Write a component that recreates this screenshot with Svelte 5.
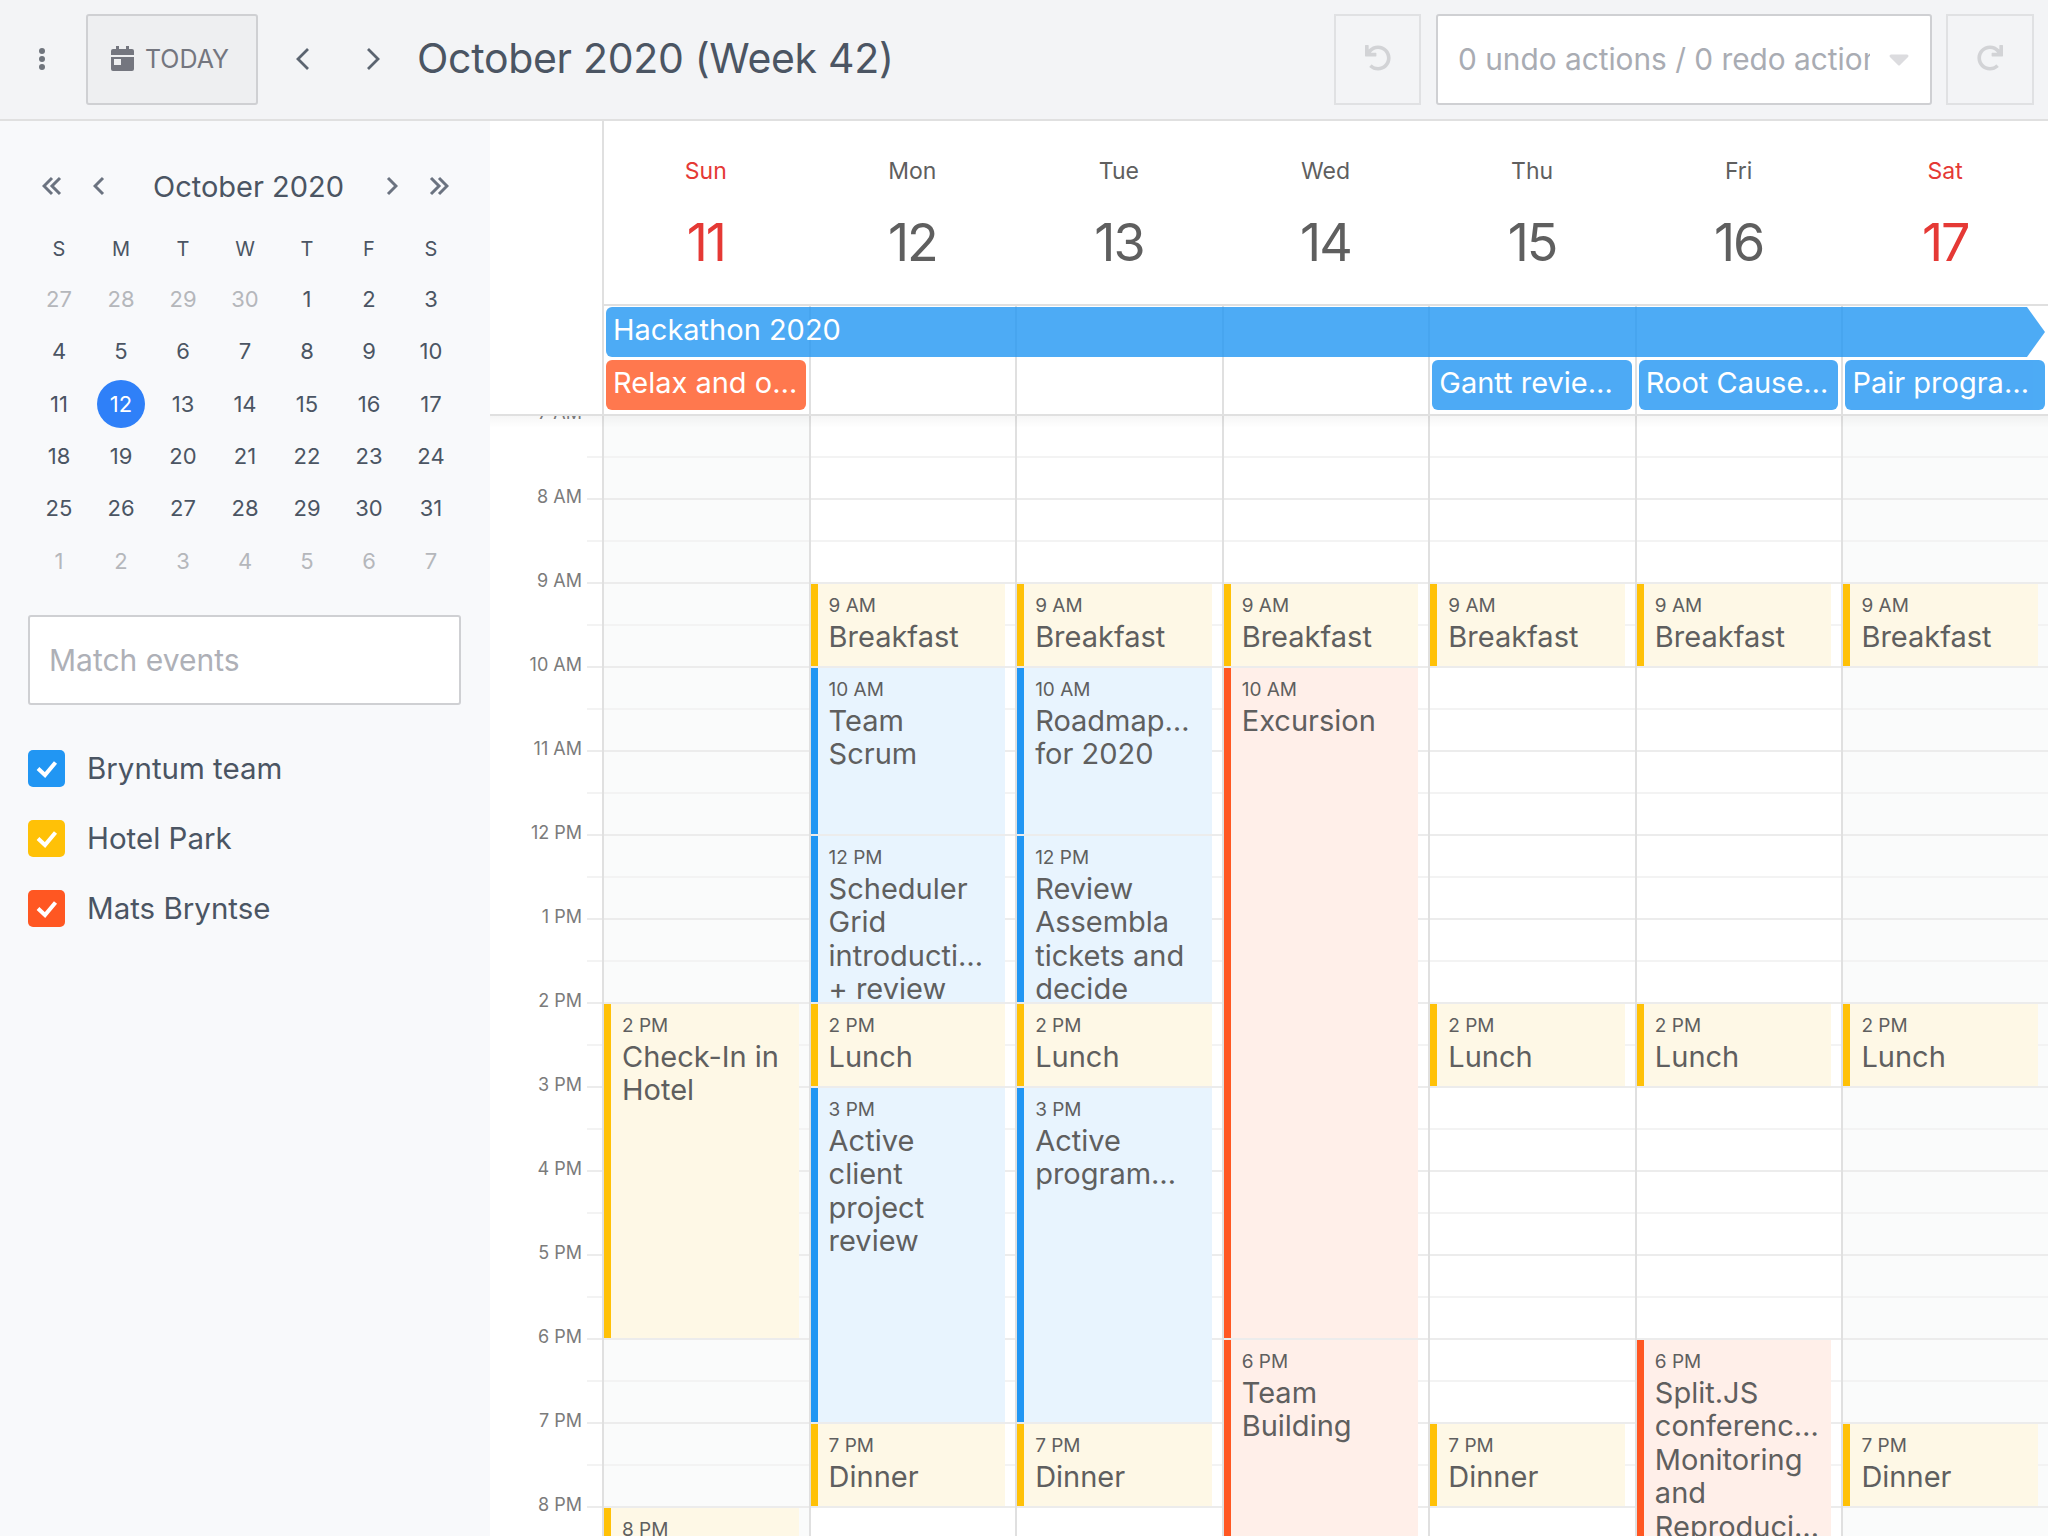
<script>
  const hours = ['6 AM','7 AM','8 AM','9 AM','10 AM','11 AM','12 PM','1 PM','2 PM','3 PM','4 PM','5 PM','6 PM','7 PM','8 PM','9 PM'];
  const days = [
    { n: 'Sun', d: 11, we: true }, { n: 'Mon', d: 12 }, { n: 'Tue', d: 13 }, { n: 'Wed', d: 14 },
    { n: 'Thu', d: 15 }, { n: 'Fri', d: 16 }, { n: 'Sat', d: 17, we: true }
  ];
  const ev = (s, e, time, c, lines) => ({ s, e, time, c, lines });
  const bf = ev(9, 10, '9 AM', 'y', ['Breakfast']);
  const lu = ev(14, 15, '2 PM', 'y', ['Lunch']);
  const di = ev(19, 20, '7 PM', 'y', ['Dinner']);
  const events = [
    [ev(14, 18, '2 PM', 'y', ['Check-In in', 'Hotel']), ev(20, 22, '8 PM', 'y', [])],
    [bf, ev(10, 12, '10 AM', 'b', ['Team', 'Scrum']), ev(12, 14, '12 PM', 'b', ['Scheduler', 'Grid', 'introducti…', '+ review']), lu, ev(15, 19, '3 PM', 'b', ['Active', 'client', 'project', 'review']), di],
    [bf, ev(10, 12, '10 AM', 'b', ['Roadmap…', 'for 2020']), ev(12, 14, '12 PM', 'b', ['Review', 'Assembla', 'tickets and', 'decide']), lu, ev(15, 19, '3 PM', 'b', ['Active', 'program…']), di],
    [bf, ev(10, 18, '10 AM', 'o', ['Excursion']), ev(18, 22, '6 PM', 'o', ['Team', 'Building'])],
    [bf, lu, di],
    [bf, lu, ev(18, 22, '6 PM', 'o', ['Split.JS', 'conferenc…', 'Monitoring', 'and', 'Reproduci…'])],
    [bf, lu, di]
  ];
  const rowOf = (h) => (h - 6) * 2 + 1;

  const weekdays = ['S', 'M', 'T', 'W', 'T', 'F', 'S'];
  const cells = [];
  for (const d of [27, 28, 29, 30]) cells.push({ d, out: true });
  for (let d = 1; d <= 31; d++) cells.push({ d, now: d === 12 });
  for (let d = 1; d <= 7; d++) cells.push({ d, out: true });

  const filters = [
    { label: 'Bryntum team', c: 'b' },
    { label: 'Hotel Park', c: 'y' },
    { label: 'Mats Bryntse', c: 'o' }
  ];
  const undoPath = 'M212.333 224.333H12c-6.627 0-12-5.373-12-12V12C0 5.373 5.373 0 12 0h48c6.627 0 12 5.373 12 12v78.112C117.773 39.279 184.26 7.47 258.175 8.007c136.906.994 246.448 111.623 246.157 248.532C504.041 393.258 393.12 504 256.333 504c-64.089 0-122.496-24.313-166.51-64.215-5.099-4.622-5.334-12.554-.467-17.42l33.967-33.967c4.474-4.474 11.662-4.717 16.401-.525C170.76 415.336 211.58 432 256.333 432c97.268 0 176-78.716 176-176 0-97.267-78.716-176-176-176-58.496 0-110.28 28.476-142.274 72.333h98.274c6.627 0 12 5.373 12 12v48c0 6.627-5.373 12-12 12z';
</script>

<div class="app">
  <header class="toolbar">
    <svg class="dots" width="8" height="24" viewBox="0 0 8 24"><circle cx="4" cy="4" r="3"/><circle cx="4" cy="12" r="3"/><circle cx="4" cy="20" r="3"/></svg>
    <button class="today">
      <svg width="23" height="25" viewBox="0 0 23 25"><path d="M5 0h3v3h7V0h3v3h3a2 2 0 0 1 2 2v4H0V5a2 2 0 0 1 2-2h3zM0 11h23v12a2 2 0 0 1-2 2H2a2 2 0 0 1-2-2zm3 2v6h7v-6z" fill-rule="evenodd"/></svg>
      TODAY
    </button>
    <button class="nav first" aria-label="previous"><svg width="16" height="24" viewBox="0 0 16 24"><path d="M13 2 3 12l10 10"/></svg></button>
    <button class="nav" aria-label="next"><svg width="16" height="24" viewBox="0 0 16 24"><path d="M3 2l10 10L3 22"/></svg></button>
    <h1>October 2020 (Week 42)</h1>
    <button class="hist" aria-label="undo"><svg width="26" height="26" viewBox="0 0 512 512"><path d={undoPath}/></svg></button>
    <div class="combo"><span>0 undo actions / 0 redo actions</span><svg width="22" height="14" viewBox="0 0 22 14"><path d="M3 3h16l-8 8z"/></svg></div>
    <button class="hist redo" aria-label="redo"><svg class="flip" width="26" height="26" viewBox="0 0 512 512"><path d={undoPath}/></svg></button>
  </header>

  <div class="main">
    <aside class="side">
      <div class="monthnav">
        <svg width="20" height="20" viewBox="0 0 20 20"><path d="M10 2 2 10l8 8M18 2l-8 8 8 8"/></svg>
        <svg class="single" width="12" height="20" viewBox="0 0 12 20"><path d="M10 2 2 10l8 8"/></svg>
        <span>October 2020</span>
        <svg class="single" width="12" height="20" viewBox="0 0 12 20"><path d="M2 2l8 8-8 8"/></svg>
        <svg width="20" height="20" viewBox="0 0 20 20"><path d="M2 2l8 8-8 8M10 2l8 8-8 8"/></svg>
      </div>
      <div class="month">
        {#each weekdays as w}<div class="wd">{w}</div>{/each}
        {#each cells as c}
          <div class="cell" class:out={c.out}><span class:now={c.now}>{c.d}</span></div>
        {/each}
      </div>
      <div class="search">Match events</div>
      <ul class="filters">
        {#each filters as f}
          <li>
            <span class="check {f.c}"><svg width="37" height="37" viewBox="0 0 37 37"><path d="M10 18.5l7 6.5 10.5-12.5"/></svg></span>
            {f.label}
          </li>
        {/each}
      </ul>
    </aside>

    <section class="cal">
      <div class="head">
        <div class="corner"></div>
        {#each days as day}
          <div class="dayhead" class:we={day.we}>
            <div class="dname">{day.n}</div>
            <div class="dnum">{day.d}</div>
          </div>
        {/each}
      </div>

      <div class="allday">
        {#each days as day, i}
          <div class="adcol" style="grid-column: {i + 2}"></div>
        {/each}
        <div class="ad hack" style="grid-column: 2 / -1; grid-row: 1">Hackathon 2020</div>
        <div class="ad orange" style="grid-column: 2; grid-row: 2">Relax and o…</div>
        <div class="ad" style="grid-column: 6; grid-row: 2">Gantt revie…</div>
        <div class="ad" style="grid-column: 7; grid-row: 2">Root Cause…</div>
        <div class="ad" style="grid-column: 8; grid-row: 2">Pair progra…</div>
      </div>

      <div class="scroll">
        <div class="grid">
          <div class="axis">
            {#each hours as h}<div class="hour"><span>{h}</span></div>{/each}
          </div>
          {#each days as day, i}
            <div class="col" class:we={day.we}>
              {#each events[i] as e}
                <div class="event {e.c}" style="grid-row: {rowOf(e.s)} / {rowOf(e.e)}">
                  <div class="time">{e.time}</div>
                  {#each e.lines as l}<div class="title">{l}</div>{/each}
                </div>
              {/each}
            </div>
          {/each}
        </div>
      </div>
    </section>
  </div>
</div>

<style>
  :global(body) { margin: 0; background: #fff; }
  * { box-sizing: border-box; }
  .app {
    width: 2048px; height: 1536px; overflow: hidden; display: flex; flex-direction: column;
    font-family: Inter, "Open Sans", sans-serif; color: #4b5563;
  }
  button { font-family: inherit; padding: 0; margin: 0; background: none; border: 0; }

  .toolbar {
    height: 121px; flex: none; display: flex; align-items: flex-start; padding: 14px 14px 0 38px;
    background: #f3f4f6; border-bottom: 2px solid #e0e0e0;
  }
  .dots { fill: #70757d; margin: 33px 0 0 0; }
  .today {
    width: 172px; height: 91px; margin-left: 40px; display: flex; align-items: center; justify-content: center; gap: 11px;
    background: #eeeff1; border: 2px solid #cfd0d3; border-radius: 3px; color: #74767f; font-size: 25px; padding: 0 4px 2px 0;
  }
  .today svg { fill: #74767f; }
  .nav { width: 70px; height: 91px; display: flex; align-items: center; justify-content: center; padding-bottom: 2px; }
  .nav svg { fill: none; stroke: #5b6470; stroke-width: 2.8; }
  .nav.first { margin-left: 10px; }
  h1 { margin: 0 0 0 9px; flex: 1; font-size: 41px; line-height: 88px; font-weight: 400; color: #4b5563; letter-spacing: -0.3px; }
  .hist {
    width: 87px; height: 91px; border: 2px solid #e0e1e3; display: flex; align-items: center; justify-content: center; padding-bottom: 3px;
  }
  .hist.redo { width: 88px; }
  .hist svg { fill: #d2d3d6; }
  .flip { transform: scaleX(-1); }
  .combo {
    width: 496px; height: 91px; margin: 0 14px 0 15px; background: #fff; border: 2px solid #cfd0d3; border-radius: 3px;
    display: flex; align-items: center; padding: 0 0 2px 20px; color: #a9acb3; font-size: 29.8px;
  }
  .combo span { width: 412px; flex: none; overflow: hidden; white-space: nowrap; }
  .combo svg { margin: 3px 0 0 18px; fill: #dcdcdf; stroke: #dcdcdf; stroke-width: 3; stroke-linejoin: round; flex: none; }

  .main { flex: 1; display: flex; min-height: 0; }
  .side { width: 490px; flex: none; background: #f8f9fb; padding: 52px 28px 0; }
  .monthnav { display: flex; align-items: center; height: 26px; padding: 0 13px 0 14px; font-size: 29px; }
  .monthnav svg { fill: none; stroke: #6b7380; stroke-width: 3; flex: none; }
  .monthnav .single { margin: 0 0 0 31px; }
  .monthnav span { flex: 1; text-align: center; color: #4b5563; padding-left: 6px; }
  .monthnav .single:nth-of-type(3) { margin: 0 31px 0 0; }
  .month { display: grid; grid-template-columns: repeat(7, 62px); margin: 26px 0 0 0; font-size: 22px; color: #4b5563; }
  .wd { height: 48px; display: flex; align-items: center; justify-content: center; font-size: 20px; }
  .cell { height: 52.3px; display: flex; align-items: center; justify-content: center; }
  .cell.out { color: #b5b7bb; }
  .cell span.now { width: 48px; height: 48px; border-radius: 50%; background: #2f80f8; color: #fff; display: flex; align-items: center; justify-content: center; }
  .search {
    margin-top: 28px; width: 433px; height: 90px; background: #fff; border: 2px solid #cfd0d3; border-radius: 3px;
    display: flex; align-items: center; padding: 0 0 0 19px; font-size: 30px; color: #aeb0b7;
  }
  .filters { list-style: none; margin: 45px 0 0; padding: 0; }
  .filters li { display: flex; align-items: center; height: 37px; margin-bottom: 33px; font-size: 29.5px; gap: 22px; color: #4b5563; }
  .check { width: 37px; height: 37px; border-radius: 5px; flex: none; }
  .check svg { display: block; fill: none; stroke: #fff; stroke-width: 4; }
  .check.b { background: #2196f3; }
  .check.y { background: #ffc107; }
  .check.o { background: #ff5722; }

  .cal { flex: 1; min-width: 0; display: flex; flex-direction: column; }
  .head, .allday, .grid { display: grid; grid-template-columns: 112px repeat(7, 1fr); }
  .head { height: 185px; flex: none; }
  .corner { border-right: 2px solid #e0e0e0; margin-right: -2px; }
  .dayhead { text-align: center; color: #5f5f5f; padding: 36px 0 0 1px; border-bottom: 2px solid #e0e0e0; }
  .dayhead.we { color: #e53935; }
  .dname { font-size: 23px; line-height: 28px; }
  .dnum { font-size: 52px; line-height: 60px; margin-top: 28px; letter-spacing: -2px; }

  .allday { height: 110px; flex: none; grid-template-rows: 50px 50px; row-gap: 3px; padding-top: 1px; border-bottom: 2px solid #e0e0e0; }
  .adcol { grid-row: 1 / 3; border-left: 2px solid #e0e0e0; margin-bottom: -6px; margin-top: -1px; }
  .ad {
    margin: 0 3px 0 4px; border-radius: 6px; background: #2196f3; opacity: 0.8; color: #fff; padding: 0 7px;
    font-size: 29px; line-height: 45px; white-space: nowrap; overflow: hidden;
  }
  .ad.orange { background: #ff5722; }
  .ad.hack { border-radius: 6px 0 0 6px; clip-path: polygon(0 0, calc(100% - 18px) 0, 100% 50%, calc(100% - 18px) 100%, 0 100%); }

  .scroll { flex: 1; min-height: 0; overflow: hidden; position: relative; }
  .scroll::before {
    content: ""; position: absolute; inset: 0 0 auto 0; height: 12px; z-index: 2; pointer-events: none;
    background: linear-gradient(rgba(0,0,0,0.035), rgba(0,0,0,0));
  }
  .grid { margin-top: -86px; }
  .hour {
    height: 84px; display: flex; justify-content: flex-end; padding-right: 20px; font-size: 18px; color: #7b7b7b;
    background: linear-gradient(#ececec 0 2px, transparent 2px 42px, #f3f3f3 42px 44px, transparent 44px) right top / 15px 84px no-repeat;
  }
  .hour span { line-height: 20px; margin-top: -11px; }
  .col {
    display: grid; grid-template-rows: repeat(32, 42px); border-left: 2px solid #e0e0e0;
    background: repeating-linear-gradient(#ececec 0 2px, transparent 2px 42px, #f3f3f3 42px 44px, transparent 44px 84px);
  }
  .col.we { background-color: #fafbfb; }
  .event {
    grid-column: 1; margin: 2px 10px 0 0; overflow: hidden; border-left: 7px solid; padding: 12px 0 0 11px; color: #5f5f5f; min-height: 0;
  }
  .event.y { border-color: #ffc107; background: #fef8e6; }
  .event.b { border-color: #2196f3; background: #e8f4fe; }
  .event.o { border-color: #ff5722; background: #ffefe9; }
  .time { font-size: 19px; line-height: 20px; margin-bottom: 3.5px; }
  .title { font-size: 29px; line-height: 33.5px; white-space: nowrap; }
</style>
